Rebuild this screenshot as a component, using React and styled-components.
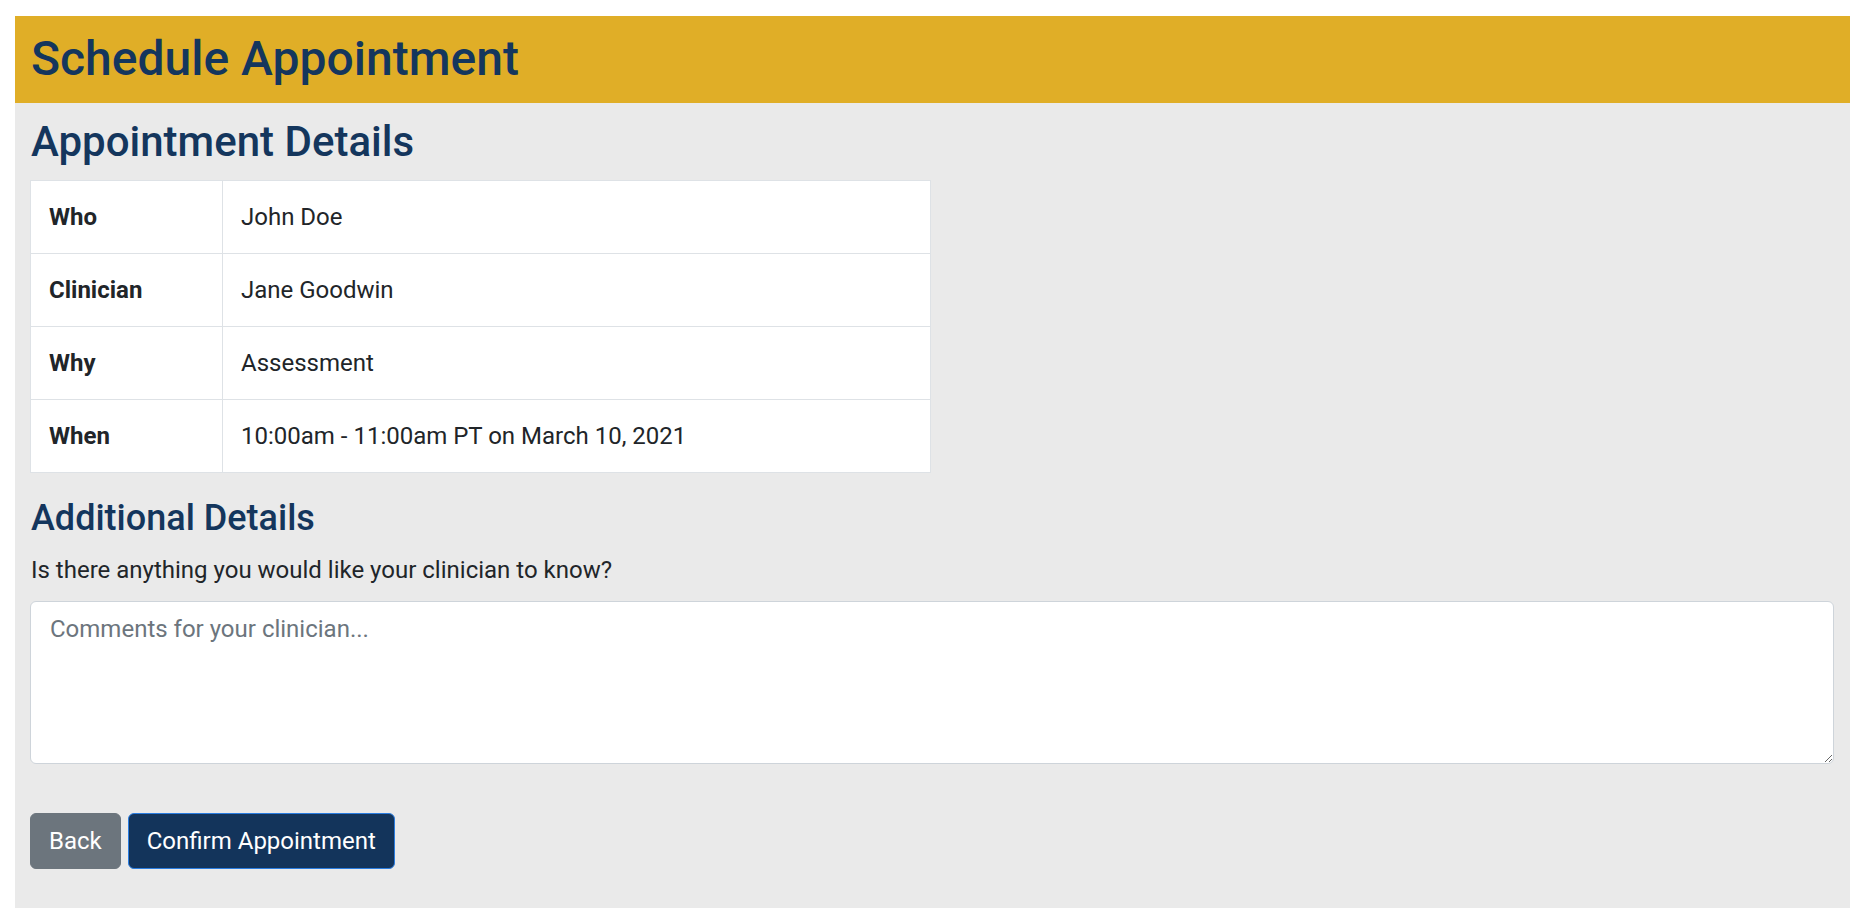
import React from 'react';
import styled, { createGlobalStyle } from 'styled-components';

const GlobalStyle = createGlobalStyle`
  * {
    box-sizing: border-box;
  }
  body {
    margin: 0;
    background: #ffffff;
    font-family: Roboto, 'Liberation Sans', Arial, sans-serif;
    font-size: 24px;
    line-height: 1.5;
    color: #212529;
  }
`;

const Page = styled.main`
  margin: 16px 12px 15px 15px;
  background: #eaeaea;
  padding-bottom: 39px;
`;

const Banner = styled.header`
  background: #e0ae27;
  padding: 14px 16px 15px;
  & h1 {
    margin: 0;
    font-size: 48px;
    line-height: 1.2;
    font-weight: 500;
    color: #14365d;
  }
`;

const Body = styled.section`
  padding: 0 16px 0 15px;
`;

const Heading = styled.h2`
  margin: ${({ $top }) => $top}px 0 ${({ $bottom }) => $bottom}px;
  padding-left: 1px;
  font-size: ${({ $size }) => $size}px;
  line-height: 1.2;
  font-weight: 500;
  color: #14365d;
`;

const DetailsTable = styled.table`
  width: 901px;
  border-collapse: collapse;
  table-layout: fixed;
  background: #ffffff;
  margin-bottom: 24px;
  & th,
  & td {
    border: 1px solid #dee2e6;
    padding: 18px;
    text-align: left;
    vertical-align: top;
    line-height: 36px;
  }
  & th {
    width: 192px;
    font-weight: 700;
  }
  & td {
    font-weight: 400;
  }
`;

const Label = styled.label`
  display: block;
  padding-left: 1px;
  margin-bottom: 13px;
`;

const Comments = styled.textarea`
  display: block;
  width: 100%;
  height: 163px;
  padding: 9px 18px 9px 19px;
  font-family: inherit;
  font-size: 24px;
  line-height: 1.5;
  color: #212529;
  background: #ffffff;
  border: 1px solid #ced4da;
  border-radius: 6px;
  outline: none;
  &::placeholder {
    color: #6c757d;
  }
`;

const Actions = styled.div`
  display: flex;
  gap: 7px;
  margin-top: 49px;
`;

const Button = styled.button`
  height: 56px;
  padding: 9px 18px;
  font-family: inherit;
  font-size: 24px;
  line-height: 36px;
  color: #ffffff;
  border-radius: 6px;
  cursor: pointer;
  background: ${({ $primary }) => ($primary ? '#13345b' : '#6c757d')};
  border: 1px solid ${({ $primary }) => ($primary ? '#2a7de1' : '#6c757d')};
`;

const details = [
  ['Who', 'John Doe'],
  ['Clinician', 'Jane Goodwin'],
  ['Why', 'Assessment'],
  ['When', '10:00am - 11:00am PT on March 10, 2021'],
];

export default function App() {
  return (
    <>
      <GlobalStyle />
      <Page>
        <Banner>
          <h1>Schedule Appointment</h1>
        </Banner>
        <Body>
          <Heading $size={42} $top={14} $bottom={13}>
            Appointment Details
          </Heading>
          <DetailsTable>
            <tbody>
              {details.map(([key, value]) => (
                <tr key={key}>
                  <th>{key}</th>
                  <td>{value}</td>
                </tr>
              ))}
            </tbody>
          </DetailsTable>
          <Heading as="h3" $size={36} $top={0} $bottom={12}>
            Additional Details
          </Heading>
          <Label htmlFor="comments">
            Is there anything you would like your clinician to know?
          </Label>
          <Comments id="comments" placeholder="Comments for your clinician..." />
          <Actions>
            <Button type="button">Back</Button>
            <Button type="button" $primary>
              Confirm Appointment
            </Button>
          </Actions>
        </Body>
      </Page>
    </>
  );
}
